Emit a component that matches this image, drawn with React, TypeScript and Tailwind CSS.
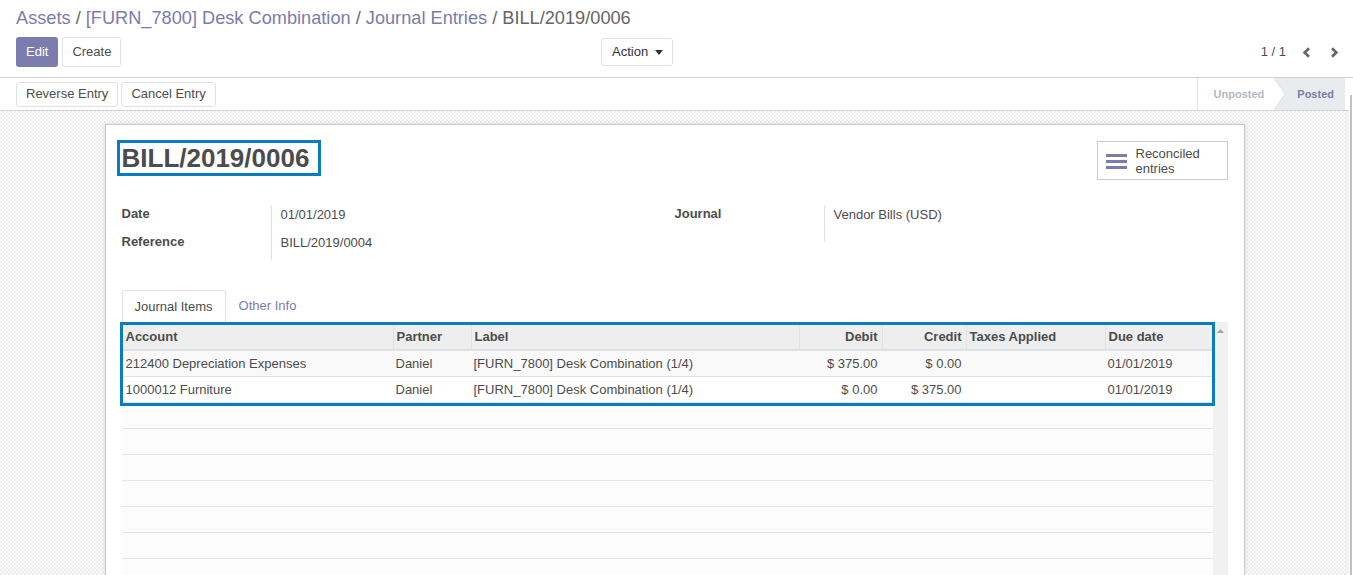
import React from 'react';

const cols = 'grid grid-cols-[270px_78px_328px_83px_84px_139px_1fr]';

const lines = [
  {
    account: '212400 Depreciation Expenses',
    partner: 'Daniel',
    label: '[FURN_7800] Desk Combination (1/4)',
    debit: '$ 375.00',
    credit: '$ 0.00',
    due: '01/01/2019',
  },
  {
    account: '1000012 Furniture',
    partner: 'Daniel',
    label: '[FURN_7800] Desk Combination (1/4)',
    debit: '$ 0.00',
    credit: '$ 375.00',
    due: '01/01/2019',
  },
];

const Breadcrumb = () => (
  <div className="text-[18.2px] leading-[22px] text-[#7c7bad] whitespace-nowrap">
    <span>Assets</span>
    <span className="text-[#666]"> / </span>
    <span>[FURN_7800] Desk Combination</span>
    <span className="text-[#666]"> / </span>
    <span>Journal Entries</span>
    <span className="text-[#666]"> / </span>
    <span className="text-[#666]">BILL/2019/0006</span>
  </div>
);

const Chevron = ({ dir }: { dir: 'left' | 'right' }) => (
  <svg width="9" height="11" viewBox="0 0 9 11">
    <path
      d={dir === 'left' ? 'M7 1.2L2.6 5.5L7 9.8' : 'M2 1.2L6.4 5.5L2 9.8'}
      fill="none"
      stroke="#666"
      strokeWidth="2.6"
    />
  </svg>
);

const ControlPanel = () => (
  <div className="px-4 pt-[7px] pb-[10px] border-b border-[#d3d3d3]">
    <Breadcrumb />
    <div className="mt-[8px] flex items-center h-[30px]">
      <div className="w-[585px] flex items-center gap-[4px]">
        <button className="h-[30px] px-[10px] rounded-[3px] bg-[#7c7bad] text-white">Edit</button>
        <button className="h-[30px] px-[9px] rounded-[3px] border border-[#dee2e6] bg-white">Create</button>
      </div>
      <button className="h-[28px] pl-[10px] pr-[9px] rounded-[3px] border border-[#dee2e6] flex items-center gap-[7px] text-[#333]">
        Action
        <svg width="8" height="5" viewBox="0 0 8 5">
          <path d="M0 0h8L4 5z" fill="#333" />
        </svg>
      </button>
      <div className="ml-auto mr-[-2px] flex items-center text-[#4c4c4c]">
        <span className="mr-[16px]">1 / 1</span>
        <span className="mr-[19px] flex">
          <Chevron dir="left" />
        </span>
        <Chevron dir="right" />
      </div>
    </div>
  </div>
);

const StatusBar = () => (
  <div className="h-[33px] flex items-center border-b border-[#d3d3d3] pl-4 pr-[4px]">
    <div className="flex gap-[3px]">
      <button className="h-[25px] px-[9px] rounded-[3px] border border-[#dee2e6] bg-white">Reverse Entry</button>
      <button className="h-[25px] px-[9px] rounded-[3px] border border-[#dee2e6] bg-white">Cancel Entry</button>
    </div>
    <div className="ml-auto flex h-full text-[11px] font-bold">
      <div className="flex items-center pl-[16px] pr-[10px] border-l border-[#dee2e6] text-[#b1b8c4]">Unposted</div>
      <div className="relative flex items-center pl-[23px] pr-[11px] bg-[#e9ecef] text-[#7c7bad]">
        <svg className="absolute left-0 top-0 h-full" width="12" viewBox="0 0 12 32" preserveAspectRatio="none">
          <path d="M0 0L11 16L0 32z" fill="#fff" />
          <path d="M0 0L11 16L0 32" fill="none" stroke="#dee2e6" strokeWidth="1" />
        </svg>
        Posted
      </div>
    </div>
  </div>
);

const Fields = () => (
  <div className="mt-[25px] grid grid-cols-2">
    <div className="grid grid-cols-[150px_1fr]">
      <div className="h-[28px] border-r border-[#dee2e6] font-bold leading-[18px]">Date</div>
      <div className="h-[28px] pl-[9px] pt-[1px] leading-[18px]">01/01/2019</div>
      <div className="h-[27px] border-r border-[#dee2e6] font-bold leading-[18px]">Reference</div>
      <div className="h-[27px] pl-[9px] pt-[1px] leading-[18px]">BILL/2019/0004</div>
    </div>
    <div className="grid grid-cols-[150px_1fr] content-start">
      <div className="h-[37px] border-r border-[#dee2e6] font-bold leading-[18px]">Journal</div>
      <div className="h-[37px] pl-[9px] pt-[1px] leading-[18px]">Vendor Bills (USD)</div>
    </div>
  </div>
);

const Tabs = () => (
  <div className="mt-[30px] flex h-[32px]">
    <div className="px-[12px] flex items-center border border-b-0 border-[#dee2e6] rounded-t-[3px] bg-white">Journal Items</div>
    <div className="px-[13px] flex items-center text-[#7c7bad]">Other Info</div>
  </div>
);

const JournalTable = () => (
  <div className="flex">
    <div className="flex-1 min-w-0 flex flex-col">
      <div className="relative z-10 -ml-[2px] -mr-[2px] border-[3px] border-[#0a7cc1]">
        <div className={`${cols} h-[26px] bg-[#eeeeee] border-b-2 border-[#dee2e6] font-bold leading-[24px]`}>
          <div className="pl-[3px]">Account</div>
          <div className="pl-[3px] border-l border-[#e2e2e2]">Partner</div>
          <div className="pl-[3px] border-l border-[#e2e2e2]">Label</div>
          <div className="pr-[4px] text-right border-l border-[#e2e2e2]">Debit</div>
          <div className="pr-[4px] text-right border-l border-[#e2e2e2]">Credit</div>
          <div className="pl-[3px] border-l border-[#e2e2e2]">Taxes Applied</div>
          <div className="pl-[3px] border-l border-[#e2e2e2]">Due date</div>
        </div>
        {lines.map((l, i) => (
          <div
            key={i}
            className={`${cols} h-[26px] items-center border-b border-[#dee2e6] ${i === 0 ? 'bg-[#f9f9f9]' : 'bg-white'}`}
          >
            <div className="pl-[3px] whitespace-nowrap">{l.account}</div>
            <div className="pl-[3px]">{l.partner}</div>
            <div className="pl-[3px] whitespace-nowrap">{l.label}</div>
            <div className="pr-[4px] text-right">{l.debit}</div>
            <div className="pr-[4px] text-right">{l.credit}</div>
            <div></div>
            <div className="pl-[3px]">{l.due}</div>
          </div>
        ))}
      </div>
      <div className="h-[23px] bg-[#fcfcfc] border-b border-[#e3e5e8]" />
      {Array.from({ length: 7 }).map((_, i) => (
        <div key={i} className="h-[26px] bg-[#fcfcfc] border-b border-[#e3e5e8]" />
      ))}
    </div>
    <div className="w-[15px] bg-[#f1f1f1] flex justify-center pt-[7px]">
      <svg width="7" height="4" viewBox="0 0 7 4">
        <path d="M3.5 0L7 4H0z" fill="#a3a3a3" />
      </svg>
    </div>
  </div>
);

const Sheet = () => (
  <div className="mx-auto w-[1140px] bg-white border border-[#cbcbcb] shadow-[0_0_4px_rgba(0,0,0,0.12)] px-4 pt-[15px] pb-10">
    <div className="flex justify-between items-start">
      <div className="-ml-[5px] border-[3px] border-[#0a7cc1] pl-[2px] pr-[9px]">
        <h1 className="text-[26px] leading-[30px] font-bold text-[#4c4c4c]">BILL/2019/0006</h1>
      </div>
      <button className="mt-[1px] w-[131px] h-[39px] border border-[#cccccc] bg-white flex items-center pl-[8px] gap-[9px] text-left">
        <svg width="21" height="16" viewBox="0 0 21 16">
          <rect y="1" width="21" height="3" fill="#7c7bad" />
          <rect y="7" width="21" height="3" fill="#7c7bad" />
          <rect y="13" width="21" height="3" fill="#7c7bad" />
        </svg>
        <span className="leading-[15px]">
          Reconciled
          <br />
          entries
        </span>
      </button>
    </div>
    <Fields />
    <Tabs />
    <JournalTable />
  </div>
);

export default function App() {
  return (
    <div className="h-[575px] w-full overflow-hidden bg-white flex flex-col font-['Liberation_Sans',Arial,sans-serif] text-[13px] text-[#4c4c4c]">
      <ControlPanel />
      <div className="flex flex-1 min-h-0">
        <div className="flex-1 min-w-0 flex flex-col">
          <StatusBar />
          <div className="flex-1 min-h-0 pt-[13px] bg-[repeating-conic-gradient(#eeeeee_0%_25%,#fafafa_0%_50%)] bg-[length:4px_4px]">
            <Sheet />
          </div>
        </div>
        <div className="w-[4px] bg-white pt-[17px] pl-[1px]">
          <div className="w-[2px] h-full bg-[#c1c1c1]" />
        </div>
      </div>
    </div>
  );
}
